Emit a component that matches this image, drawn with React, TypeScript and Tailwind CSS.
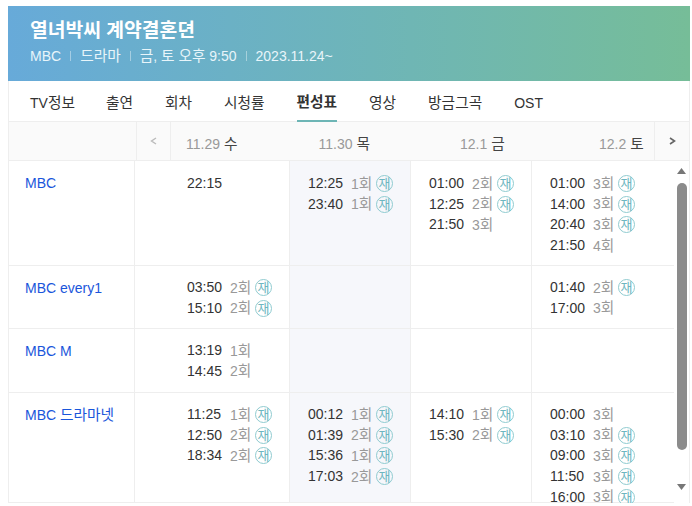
import { Fragment } from "react";

const font = { fontFamily: '"Liberation Sans", "Noto Sans CJK KR", sans-serif' };

type Show = [string, string, boolean?];

const rows: { name: string; height: string; pad: string; cells: Show[][] }[] = [
  {
    name: "MBC",
    height: "h-[105px]",
    pad: "pt-[12.5px]",
    cells: [
      [["22:15", ""]],
      [["12:25", "1회", true], ["23:40", "1회", true]],
      [["01:00", "2회", true], ["12:25", "2회", true], ["21:50", "3회"]],
      [["01:00", "3회", true], ["14:00", "3회", true], ["20:40", "3회", true], ["21:50", "4회"]],
    ],
  },
  {
    name: "MBC every1",
    height: "h-[63px]",
    pad: "pt-[11.5px]",
    cells: [
      [["03:50", "2회", true], ["15:10", "2회", true]],
      [],
      [],
      [["01:40", "2회", true], ["17:00", "3회"]],
    ],
  },
  {
    name: "MBC M",
    height: "h-[64px]",
    pad: "pt-[11.5px]",
    cells: [[["13:19", "1회"], ["14:45", "2회"]], [], [], []],
  },
  {
    name: "MBC 드라마넷",
    height: "h-[110px]",
    pad: "pt-[11.5px]",
    cells: [
      [["11:25", "1회", true], ["12:50", "2회", true], ["18:34", "2회", true]],
      [["00:12", "1회", true], ["01:39", "2회", true], ["15:36", "1회", true], ["17:03", "2회", true]],
      [["14:10", "1회", true], ["15:30", "2회", true]],
      [["00:00", "3회"], ["03:10", "3회", true], ["09:00", "3회", true], ["11:50", "3회", true], ["16:00", "3회", true]],
    ],
  },
];

const tabs = ["TV정보", "출연", "회차", "시청률", "편성표", "영상", "방금그곡", "OST"];

const cellStyles = [
  "w-[155px] pl-[52px]",
  "w-[121px] pl-[18px] bg-[#f6f7fb]",
  "w-[121px] pl-[18px]",
  "w-[143px] pl-[18px]",
];

// hangul in the reference runs wider than Noto, so bump it a little next to latin text
function Ko({ text }: { text: string }) {
  return (
    <>
      {text.split(/([가-힣]+)/).map((part, i) =>
        i % 2 ? (
          <span key={i} className="text-[14.7px]">
            {part}
          </span>
        ) : (
          <Fragment key={i}>{part}</Fragment>
        ),
      )}
    </>
  );
}

function Cell({ shows, className }: { shows: Show[]; className: string }) {
  return (
    <div className={`shrink-0 border-r border-[#eeeeee] ${className}`}>
      {shows.map(([time, ep, re], i) => (
        <div key={i} className="flex h-[20.6px] items-center text-[14px] text-[#333333]">
          <span className="w-[43px]">{time}</span>
          <span className="w-[25px] text-[#999999]">
            <Ko text={ep} />
          </span>
          {re && (
            <span className="flex h-[17px] w-[17px] items-center justify-center rounded-full border border-[#8fcbd0] text-[13px] leading-none text-[#6db6c0]">
              재
            </span>
          )}
        </div>
      ))}
    </div>
  );
}

export default function App() {
  return (
    <div style={font} className="h-[506px] w-[692px] overflow-hidden bg-white pl-[8px] pt-[6px]">
      <div className="flex h-[75px] w-[682px] flex-col bg-gradient-to-r from-[#67aad9] to-[#76bd98] pl-[22px] pt-[14px] text-white">
        <h1 className="text-[19.3px] font-bold leading-[22px]">열녀박씨 계약결혼뎐</h1>
        <div className="mt-[4px] flex items-center text-[14px] leading-[20px] text-[#e8f5fa]">
          <span>MBC</span>
          <span className="mx-[9px] h-[10px] w-px bg-white/40" />
          <span><Ko text="드라마" /></span>
          <span className="mx-[9px] h-[10px] w-px bg-white/40" />
          <span><Ko text="금, 토 오후 9:50" /></span>
          <span className="mx-[9px] h-[10px] w-px bg-white/40" />
          <span>2023.11.24~</span>
        </div>
      </div>

      <div className="w-[682px] border-x border-[#eeeeee]">
        <nav className="flex h-[41px] gap-[32px] border-b border-[#eeeeee] pl-[21px] text-[14px] text-[#333333]">
          {tabs.map((tab) => (
            <span
              key={tab}
              className={
                tab === "편성표"
                  ? "flex h-[41px] items-center border-b-2 border-[#6db5b5] pt-[4px] font-bold"
                  : "flex h-[40px] items-center pt-[4px] first:-mr-[1px]"
              }
            >
              <Ko text={tab} />
            </span>
          ))}
        </nav>

        <div className="flex h-[39px] border-b border-[#eeeeee] bg-[#fafafa] text-[14px] text-[#999999]">
          <div className="w-[128px] border-r border-[#eeeeee]" />
          <div className="flex w-[34px] items-center justify-center border-r border-[#eeeeee]">
            <svg width="7" height="8" viewBox="0 0 7 8" fill="none" stroke="#bbbbbb" strokeWidth="1.4">
              <path d="M6 1 1.5 4 6 7" />
            </svg>
          </div>
          <div className="flex flex-1 items-center pt-[7px]">
            <span className="ml-[15px] w-[132.5px]">11.29 <span className="text-[14.7px] text-[#444444]">수</span></span>
            <span className="w-[141.5px]">11.30 <span className="text-[14.7px] text-[#444444]">목</span></span>
            <span className="w-[139px]">12.1 <span className="text-[14.7px] text-[#444444]">금</span></span>
            <span>12.2 <span className="text-[14.7px] text-[#444444]">토</span></span>
          </div>
          <div className="flex w-[35px] items-center justify-center border-l border-[#eeeeee]">
            <svg width="7" height="8" viewBox="0 0 7 8" fill="none" stroke="#666666" strokeWidth="1.6">
              <path d="M1 1 5.5 4 1 7" />
            </svg>
          </div>
        </div>

        <div className="flex h-[342px] overflow-hidden">
          <div className="w-[665px] shrink-0">
            {rows.map((row) => (
              <div key={row.name} className={`flex border-b border-[#eeeeee] ${row.height}`}>
                <div className="w-[126px] shrink-0 border-r border-[#eeeeee] pl-[16px] pt-[12px] text-[14px] leading-[20px] text-[#1a56db]">
                  <Ko text={row.name} />
                </div>
                {row.cells.map((shows, i) => (
                  <Cell key={i} shows={shows} className={`${cellStyles[i]} ${row.pad}`} />
                ))}
              </div>
            ))}
          </div>
          <div className="flex w-[15px] flex-col items-center bg-white pt-[7px]">
            <svg width="9" height="6" viewBox="0 0 9 6" fill="#777777">
              <path d="M4.5 0 9 6H0z" />
            </svg>
            <div className="mt-[9px] h-[267px] w-[10px] rounded-full bg-[#8b8b8b]" />
            <svg className="mt-[34px]" width="9" height="6" viewBox="0 0 9 6" fill="#777777">
              <path d="M0 0h9L4.5 6z" />
            </svg>
          </div>
        </div>
      </div>
    </div>
  );
}
